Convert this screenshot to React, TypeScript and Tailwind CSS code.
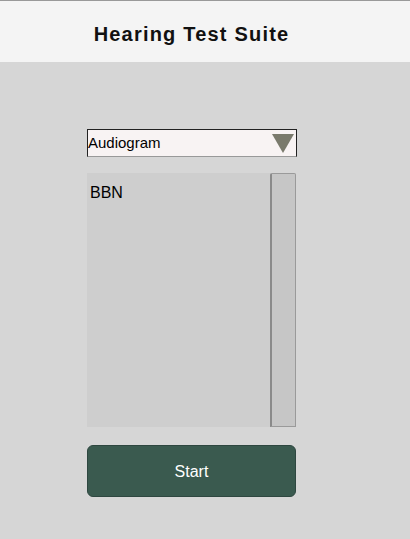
import React from "react";

export default function App() {
  return (
    <div className="w-[410px] h-[539px] bg-[#d6d6d6] flex flex-col" style={{ fontFamily: '"Liberation Sans", Arial, sans-serif' }}>
      <div className="h-[62px] bg-[#f4f4f4] border-t border-[#999] flex items-center justify-center pr-[27px] pt-[5px] shrink-0">
        <span className="text-[20px] font-bold tracking-[1.2px] text-[#111]">Hearing Test Suite</span>
      </div>
      <div className="flex flex-col pl-[87px] pt-[67px]">
        <div className="w-[210px] h-[28px] bg-[#f8f3f3] border border-[#222] border-b-[#999] flex items-center justify-between pr-[2px]">
          <span className="text-[15px] text-black leading-none mb-[2px]">Audiogram</span>
          <svg width="22" height="19" viewBox="0 0 22 19">
            <polygon points="0,0 22,0 11,19" fill="#7a7a6c" />
          </svg>
        </div>
        <div className="mt-[16px] w-[209px] h-[254px] bg-[#cecece] flex">
          <div className="flex-1 pl-[3px] pt-[8px]">
            <span className="text-[16px] text-black">BBN</span>
          </div>
          <div className="w-[26px] h-full bg-[#c6c6c6] border border-[#9a9a9a] border-l-[2px] border-l-[#8a8a8a] rounded-t-[2px]" />
        </div>
        <button className="mt-[18px] w-[209px] h-[52px] bg-[#3a5a4f] border border-[#2e4740] rounded-[6px] text-white text-[16px] pt-[2px]">
          Start
        </button>
      </div>
    </div>
  );
}
